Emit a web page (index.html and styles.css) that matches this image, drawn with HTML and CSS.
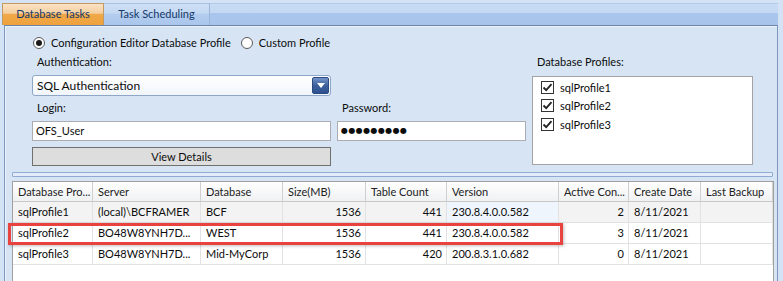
FILE: index.html
```html
<!DOCTYPE html>
<html lang="en">
<head>
    <meta charset="UTF-8">
    <title>Database Tasks</title>
    <link rel="stylesheet" href="styles.css">
</head>
<body>
    <div class="window">
        <div class="tabs">
            <div class="tab active">Database Tasks</div>
            <div class="tab">Task Scheduling</div>
            <div class="tab-rest"></div>
        </div>
        <div class="panel">
            <div class="options">
                <div class="radio-row">
                    <span class="radio"><span class="dot checked"></span>Configuration Editor Database Profile</span>
                    <span class="radio"><span class="dot"></span>Custom Profile</span>
                </div>
                <div class="form-grid">
                    <div class="lbl auth-lbl">Authentication:</div>
                    <div class="lbl prof-lbl">Database Profiles:</div>
                    <div class="combo">SQL Authentication<span class="combo-btn"></span></div>
                    <div class="profiles">
                        <div class="item"><span class="check"><svg width="11" height="11" viewBox="0 0 11 11"><path d="M1.5 5.5 L4.2 8.2 L9.5 2.2" fill="none" stroke="#222" stroke-width="1.8"/></svg></span>sqlProfile1</div>
                        <div class="item"><span class="check"><svg width="11" height="11" viewBox="0 0 11 11"><path d="M1.5 5.5 L4.2 8.2 L9.5 2.2" fill="none" stroke="#222" stroke-width="1.8"/></svg></span>sqlProfile2</div>
                        <div class="item"><span class="check"><svg width="11" height="11" viewBox="0 0 11 11"><path d="M1.5 5.5 L4.2 8.2 L9.5 2.2" fill="none" stroke="#222" stroke-width="1.8"/></svg></span>sqlProfile3</div>
                    </div>
                    <div class="lbl login-lbl">Login:</div>
                    <div class="lbl pw-lbl">Password:</div>
                    <div class="field login">OFS_User</div>
                    <div class="field pw">●●●●●●●●●</div>
                    <div class="btn">View Details</div>
                </div>
            </div>

            <div class="lower">
                <div class="splitter"></div>
                <div class="grid-wrap">
                    <div class="row head">
                        <div class="cell">Database Pro...</div>
                        <div class="cell">Server</div>
                        <div class="cell">Database</div>
                        <div class="cell">Size(MB)</div>
                        <div class="cell">Table Count</div>
                        <div class="cell">Version</div>
                        <div class="cell">Active Con...</div>
                        <div class="cell">Create Date</div>
                        <div class="cell">Last Backup</div>
                    </div>
                    <div class="row focused">
                        <div class="cell">sqlProfile1</div>
                        <div class="cell">(local)\BCFRAMER</div>
                        <div class="cell">BCF</div>
                        <div class="cell num">1536</div>
                        <div class="cell num">441</div>
                        <div class="cell current">230.8.4.0.0.582</div>
                        <div class="cell num">2</div>
                        <div class="cell">8/11/2021</div>
                        <div class="cell"></div>
                    </div>
                    <div class="row">
                        <div class="cell">sqlProfile2</div>
                        <div class="cell">BO48W8YNH7D...</div>
                        <div class="cell">WEST</div>
                        <div class="cell num">1536</div>
                        <div class="cell num">441</div>
                        <div class="cell">230.8.4.0.0.582</div>
                        <div class="cell num">3</div>
                        <div class="cell">8/11/2021</div>
                        <div class="cell"></div>
                    </div>
                    <div class="row">
                        <div class="cell">sqlProfile3</div>
                        <div class="cell">BO48W8YNH7D...</div>
                        <div class="cell">Mid-MyCorp</div>
                        <div class="cell num">1536</div>
                        <div class="cell num">420</div>
                        <div class="cell">200.8.3.1.0.682</div>
                        <div class="cell num">0</div>
                        <div class="cell">8/11/2021</div>
                        <div class="cell"></div>
                    </div>
                    <div class="highlight"></div>
                </div>
            </div>
        </div>
    </div>
</body>
</html>
```

FILE: styles.css
```css
body {
    margin: 0;
    background: #d3e2f4;
    font-family: Lato, "Noto Sans", sans-serif;
    font-size: 11px;
    color: #0c0c0c;
    overflow: hidden;
}
.window {
    padding-left: 2px;
    width: 776px;
}
.tabs {
    display: flex;
    height: 25px;
    padding-top: 3px;
    box-sizing: border-box;
}
.tab {
    height: 22px;
    box-sizing: border-box;
    line-height: 20px;
    text-align: center;
    color: #15386a;
    border-top: 1px solid #a9c1e2;
    border-right: 1px solid #9ab5da;
    background: linear-gradient(#cfe0f5 0, #c3d8f3 45%, #b3cdee 46%, #aac6ec 100%);
}
.tab.active {
    width: 102px;
    border: 1px solid #c49a63;
    border-bottom: none;
    background: linear-gradient(#fae2c4 0, #f5cf9f 45%, #f0a94a 46%, #eea23c 100%);
}
.tab:nth-child(2) {
    width: 106px;
}
.tab-rest {
    flex: 1;
    border-top: 1px solid #b3cae8;
    background: linear-gradient(#c8dcf4 0, #c3d8f2 42%, #aac6ec 43%, #a8c4eb 100%);
}
.panel {
    margin-left: 2px;
    height: 260px;
    border: 1px solid #7d97bc;
    border-top-color: #6b84a8;
    background: #d6e4f4;
    box-shadow: inset 1px 1px 0 #eaf2fb;
}

/* top section */
.options {
    padding-left: 27px;
}
.radio-row {
    display: flex;
    align-items: center;
    height: 25px;
    padding-top: 9px;
    line-height: 16px;
    box-sizing: border-box;
    margin-left: 1px;
    gap: 10px;
}
.radio {
    display: flex;
    align-items: center;
    gap: 6px;
}
.dot {
    width: 12px;
    height: 12px;
    box-sizing: border-box;
    border: 1px solid #5b5b5b;
    border-radius: 50%;
    background: #fff;
    display: flex;
    align-items: center;
    justify-content: center;
}
.dot.checked::after {
    content: "";
    width: 6px;
    height: 6px;
    border-radius: 50%;
    background: #1a1a1a;
}
.form-grid {
    display: grid;
    grid-template-columns: 299px 189px 221px;
    grid-template-rows: 24px 21px 25px 20px 25px;
    column-gap: 6px;
}
.lbl {
    align-self: end;
    padding: 0 0 5px 5px;
    line-height: 16px;
}
.auth-lbl { grid-column: 1; grid-row: 1; }
.prof-lbl { grid-column: 3; grid-row: 1; }
.login-lbl { grid-column: 1; grid-row: 3; }
.pw-lbl { grid-column: 2; grid-row: 3; }
.combo {
    grid-column: 1;
    grid-row: 2;
    position: relative;
    border: 1px solid #8ea6c8;
    border-radius: 3px;
    background: linear-gradient(#ffffff, #f1f5fb);
    padding-left: 4px;
    line-height: 19px;
    font-size: 12px;
}
.combo-btn {
    position: absolute;
    right: 1px;
    top: 1px;
    width: 17px;
    height: 17px;
    box-sizing: border-box;
    border: 1px solid #2a4a80;
    border-radius: 2px;
    background: linear-gradient(#7394c9, #3d609c 50%, #2d5190);
}
.combo-btn::after {
    content: "";
    position: absolute;
    left: 4px;
    top: 5px;
    border-left: 4px solid transparent;
    border-right: 4px solid transparent;
    border-top: 5px solid #fff;
}
.profiles {
    grid-column: 3;
    grid-row: 2 / span 4;
    margin: 1px 0 1px;
    border: 1px solid #a3a3a3;
    background: #fff;
    padding: 1px 0 0 8px;
}
.item {
    display: flex;
    align-items: center;
    gap: 6px;
    height: 18.5px;
}
.check {
    width: 13px;
    height: 13px;
    box-sizing: border-box;
    border: 1px solid #333;
    background: #fff;
    display: flex;
    align-items: center;
    justify-content: center;
}
.field {
    grid-row: 4;
    border: 1px solid #abadb3;
    background: #fff;
    padding-left: 3px;
    line-height: 18px;
}
.field.login { grid-column: 1; }
.field.pw {
    grid-column: 2;
    font-family: "DejaVu Sans", sans-serif;
    font-size: 8px;
    letter-spacing: 0.4px;
    padding-left: 3px;
}
.btn {
    grid-column: 1;
    grid-row: 5;
    align-self: end;
    height: 19px;
    box-sizing: border-box;
    border: 1px solid #707070;
    background: #dddddd;
    text-align: center;
    line-height: 17px;
}

/* grid section */
.lower {
    padding: 6px 4px 0 7px;
}
.splitter {
    height: 5px;
    box-sizing: border-box;
    border: 1px solid #8fabd3;
    border-radius: 1px;
    background: #e3ecf8;
    margin-bottom: 4px;
}
.grid-wrap {
    position: relative;
    width: 762px;
    height: 110px;
    box-sizing: border-box;
    border: 1px solid #a0a0a0;
    background: #fff;
}
.row {
    display: grid;
    grid-template-columns: 80px 108px 82px 83px 81px 112px 70px 72px 72px;
    height: 21px;
    box-sizing: border-box;
    border-bottom: 1px solid #e2e2e2;
}
.row.head {
    height: 20px;
    border-bottom: 1px solid #c8c8c8;
    background: linear-gradient(#ffffff, #f0f1f3);
    color: #222;
}
.cell {
    border-right: 1px solid #e2e2e2;
    padding: 0 5px;
    line-height: 19px;
    white-space: nowrap;
    overflow: hidden;
}
.head .cell {
    border-right-color: #d0d0d0;
}
.cell.num {
    text-align: right;
    padding-right: 4px;
}
.row.focused {
    background: #f3f3f3;
}
.cell.current {
    background: #eef5fc;
}
.highlight {
    position: absolute;
    left: -5px;
    top: 41px;
    width: 555px;
    height: 22px;
    box-sizing: border-box;
    border: 3px solid #e8433e;
    box-shadow: 1px 1px 3px rgba(0, 0, 0, 0.25);
}
```
